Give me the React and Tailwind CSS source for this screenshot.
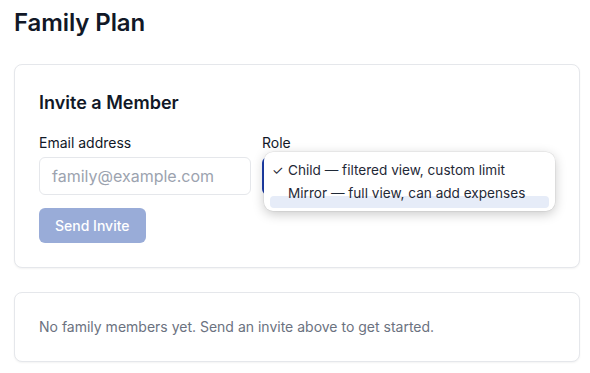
import React from "react";

export default function App() {
  return (
    <div className="min-h-[373px] bg-white pl-[14px] pr-[10px] pt-[7px] text-[#111827]" style={{ fontFamily: "Inter, 'Noto Sans', sans-serif" }}>
      <h1 className="text-[24px] font-semibold leading-[32px] tracking-[-0.1px]">Family Plan</h1>

      <div className="mt-[25px] rounded-[8px] border border-[#e5e7eb] bg-white p-6 shadow-[0_1px_2px_rgba(0,0,0,0.05)]">
        <h2 className="text-[18px] font-semibold leading-[28px] text-[#111827]">Invite a Member</h2>
        <div className="mt-4 flex gap-[11px]">
          <div className="flex w-[212px] flex-col">
            <label className="text-[14px] leading-[20px] text-[#111827]">Email address</label>
            <div className="mt-[4px] flex h-[38px] items-center rounded-[6px] border border-[#e5e7eb] px-3 text-[16px] text-[#9ca3af]">
              family@example.com
            </div>
          </div>
          <div className="relative flex flex-1 flex-col">
            <label className="text-[14px] leading-[20px] text-[#111827]">Role</label>
            <div className="mt-[4px] h-[38px] rounded-[6px] border-2 border-[#1e40af]" />
            <div className="absolute left-[2px] right-0 top-[19px] rounded-[9px] bg-white pt-[7px] pb-[6px] shadow-[0_3px_12px_rgba(0,0,0,0.22),0_0_0_0.5px_rgba(0,0,0,0.08)]">
              <div className="flex h-[23px] items-center pl-[8px] text-[13.6px] text-[#1f2937]">
                <span className="w-[16px] text-[13px]">✓</span>
                <span>Child — filtered view, custom limit</span>
              </div>
              <div className="relative flex h-[23px] items-center pl-[24px] text-[13.6px] text-[#1f2937]">
                <div className="absolute bottom-[-3px] left-[6px] right-[6px] h-[12px] rounded-[4px] bg-[#e6ecf8]" />
                <span className="relative">Mirror — full view, can add expenses</span>
              </div>
            </div>
          </div>
        </div>
        <button className="mt-[13px] h-[35px] rounded-[6px] bg-[#99acd8] px-4 text-[14px] font-medium text-white">
          Send Invite
        </button>
      </div>

      <div className="mt-6 rounded-[8px] border border-[#e5e7eb] bg-white px-6 py-6 shadow-[0_1px_2px_rgba(0,0,0,0.05)]">
        <p className="text-[14px] leading-[20px] text-[#6b7280]">No family members yet. Send an invite above to get started.</p>
      </div>
    </div>
  );
}
